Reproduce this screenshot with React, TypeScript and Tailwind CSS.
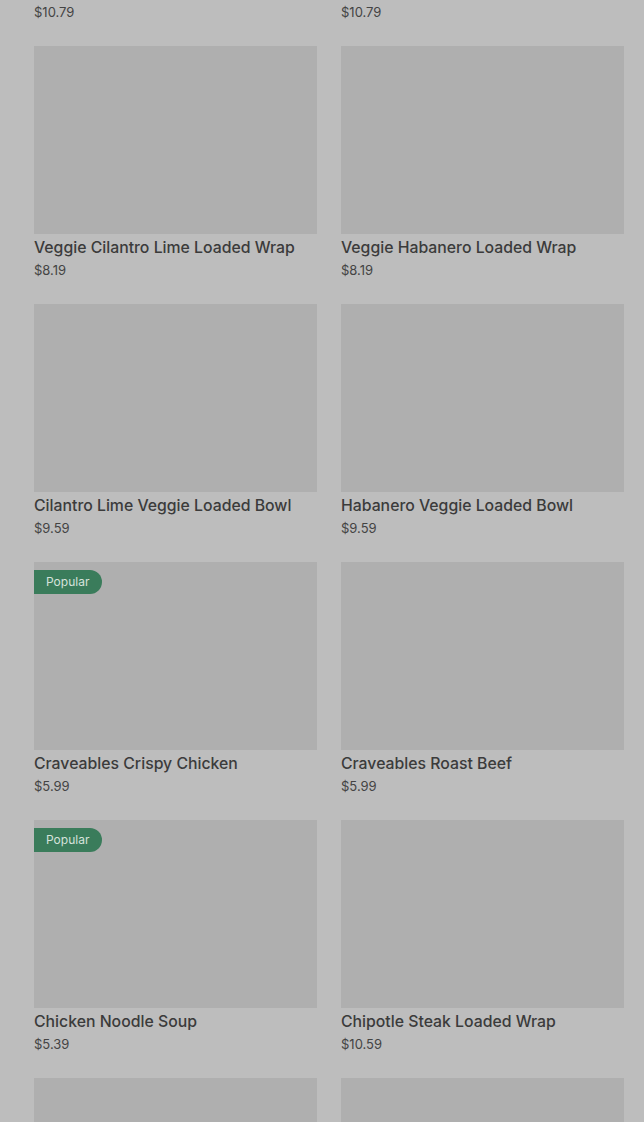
import React from "react";

type Item = { name: string; price: string; popular?: boolean };

const items: Item[] = [
  { name: "Steak Cilantro Lime Loaded Wrap", price: "$10.79" },
  { name: "Steak Habanero Loaded Wrap", price: "$10.79" },
  { name: "Veggie Cilantro Lime Loaded Wrap", price: "$8.19" },
  { name: "Veggie Habanero Loaded Wrap", price: "$8.19" },
  { name: "Cilantro Lime Veggie Loaded Bowl", price: "$9.59" },
  { name: "Habanero Veggie Loaded Bowl", price: "$9.59" },
  { name: "Craveables Crispy Chicken", price: "$5.99", popular: true },
  { name: "Craveables Roast Beef", price: "$5.99" },
  { name: "Chicken Noodle Soup", price: "$5.39", popular: true },
  { name: "Chipotle Steak Loaded Wrap", price: "$10.59" },
  { name: "Turkey Cali Club", price: "$9.99" },
  { name: "Baja Chipotle Chicken Wrap", price: "$9.49" },
];

export default function App() {
  return (
    <div
      className="h-[1122px] w-[644px] overflow-hidden bg-[#bdbdbd]"
      style={{ fontFamily: "Inter, 'Noto Sans', sans-serif" }}
    >
      <div className="-mt-[212px] grid grid-cols-2 gap-x-[24px] gap-y-[24px] pl-[34px] pr-[20px]">
        {items.map((it, i) => (
          <div key={i} className="flex flex-col">
            <div className="relative h-[188px] bg-[#afafaf]">
              {it.popular && (
                <div className="absolute left-0 top-[8px] flex h-[24px] items-center rounded-r-full bg-[#3a7c5b] pl-[12px] pr-[13px] text-[12px] text-[#d6e2db]">
                  Popular
                </div>
              )}
            </div>
            <div className="mt-[2px] text-[15.8px] font-medium leading-[24px] text-[#3b3b3b]">
              {it.name}
            </div>
            <div className="text-[13px] leading-[20px] text-[#444444]">{it.price}</div>
          </div>
        ))}
      </div>
    </div>
  );
}
